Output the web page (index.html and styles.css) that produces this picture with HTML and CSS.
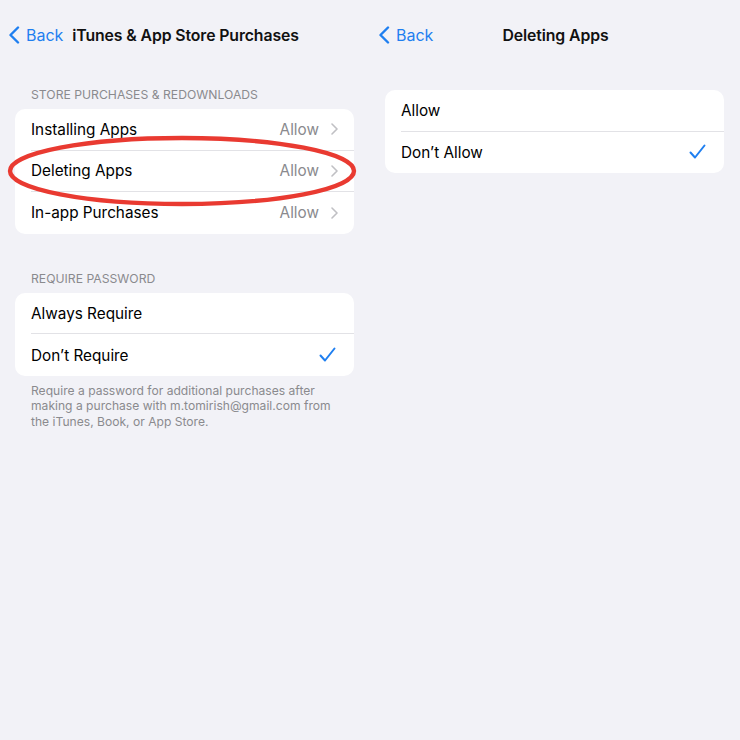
FILE: index.html
```html
<!doctype html>
<html>
<head>
<title>Settings</title>
<meta http-equiv="Content-Type" content="text/html; charset=utf-8" />
<link rel="stylesheet" href="styles.css">
</head>
<body>

<div class="screen">

<section class="panel">
	<div class="nav">
		<a class="back">
			<svg width="12" height="18" viewBox="0 0 12 18"><path d="M10 1.5 L2.5 9 L10 16.5" fill="none" stroke="currentColor" stroke-width="2.4" stroke-linecap="round" stroke-linejoin="round"/></svg>
			Back
		</a>
		<h3 class="title">iTunes &amp; App Store Purchases</h3>
		<span></span>
	</div>

	<div class="section first">
		<div class="section-header">STORE PURCHASES &amp; REDOWNLOADS</div>
		<div class="card">
			<div class="row">
				<span class="label">Installing Apps</span>
				<span class="value">Allow</span>
				<svg class="chevron" width="7" height="12" viewBox="0 0 7 12"><path d="M1 1 L6 6 L1 11" fill="none" stroke="currentColor" stroke-width="1.6" stroke-linecap="round" stroke-linejoin="round"/></svg>
			</div>
			<div class="row">
				<span class="label">Deleting Apps</span>
				<span class="value">Allow</span>
				<svg class="chevron" width="7" height="12" viewBox="0 0 7 12"><path d="M1 1 L6 6 L1 11" fill="none" stroke="currentColor" stroke-width="1.6" stroke-linecap="round" stroke-linejoin="round"/></svg>
			</div>
			<div class="row">
				<span class="label">In-app Purchases</span>
				<span class="value">Allow</span>
				<svg class="chevron" width="7" height="12" viewBox="0 0 7 12"><path d="M1 1 L6 6 L1 11" fill="none" stroke="currentColor" stroke-width="1.6" stroke-linecap="round" stroke-linejoin="round"/></svg>
			</div>
			<!-- Red annotation round the Deleting Apps row -->
			<svg class="annotation" width="354" height="76" viewBox="0 0 354 76"><ellipse cx="175" cy="37" rx="172" ry="33" fill="none" stroke="#e93a31" stroke-width="4.4"/></svg>
		</div>
	</div>

	<div class="section">
		<div class="section-header">REQUIRE PASSWORD</div>
		<div class="card">
			<div class="row">
				<span class="label">Always Require</span>
			</div>
			<div class="row">
				<span class="label">Don’t Require</span>
				<svg class="check" width="17" height="16" viewBox="0 0 17 16"><path d="M1.5 8.5 L6 13.5 L15.5 1.5" fill="none" stroke="currentColor" stroke-width="2" stroke-linecap="round" stroke-linejoin="round"/></svg>
			</div>
		</div>
		<p class="section-footer">Require a password for additional purchases after making a purchase with m.tomirish@gmail.com from the iTunes, Book, or App Store.</p>
	</div>
</section>

<section class="panel">
	<div class="nav">
		<a class="back">
			<svg width="12" height="18" viewBox="0 0 12 18"><path d="M10 1.5 L2.5 9 L10 16.5" fill="none" stroke="currentColor" stroke-width="2.4" stroke-linecap="round" stroke-linejoin="round"/></svg>
			Back
		</a>
		<h3 class="title">Deleting Apps</h3>
		<span></span>
	</div>

	<div class="section options">
		<div class="card">
			<div class="row">
				<span class="label">Allow</span>
			</div>
			<div class="row">
				<span class="label">Don’t Allow</span>
				<svg class="check" width="17" height="16" viewBox="0 0 17 16"><path d="M1.5 8.5 L6 13.5 L15.5 1.5" fill="none" stroke="currentColor" stroke-width="2" stroke-linecap="round" stroke-linejoin="round"/></svg>
			</div>
		</div>
	</div>
</section>

</div>

</body>
</html>
```

FILE: styles.css
```css
body {
	margin: 0;
	background-color: #f2f2f7;
	font-family: Inter, "Liberation Sans", sans-serif;
	color: #000;
}

.screen {
	display: flex;
	width: 740px;
	height: 740px;
}

.panel {
	width: 370px;
	box-sizing: border-box;
	padding: 15px 16px 0 15px;
}

.nav {
	display: grid;
	grid-template-columns: 1fr auto 1fr;
	align-items: center;
	height: 40px;
	margin: 0 -9px 0 -7px;
}

.back {
	display: flex;
	align-items: center;
	gap: 6px;
	color: #1f7ff0;
	font-size: 16px;
}

.title {
	margin: 0;
	font-size: 15.8px;
	font-weight: 600;
	letter-spacing: -0.1px;
	color: #111;
}

.section.first {
	margin-top: 32px;
}

.section {
	margin-top: 37px;
}

.section.options {
	margin-top: 35px;
}

.section-header {
	padding-left: 16px;
	font-size: 12.2px;
	line-height: 16px;
	color: #8a8a8e;
	margin-bottom: 6px;
}

.card {
	position: relative;
	background-color: #fff;
	border-radius: 10px;
}

.row {
	display: flex;
	align-items: center;
	height: 41.6px;
	margin-left: 16px;
	padding-right: 16px;
	box-sizing: border-box;
	border-bottom: 1px solid #e2e2e6;
	font-size: 15.3px;
}

.row:last-of-type {
	border-bottom: none;
}

.label {
	flex: 1;
}

.value {
	color: #8a8a8e;
}

.chevron {
	margin-left: 12px;
	color: #c0c0c4;
}

.check {
	margin-right: 2px;
	color: #1f7ff0;
}

.annotation {
	position: absolute;
	left: -8px;
	top: 25px;
}

.section-footer {
	margin: 7px 0 0;
	padding: 0 16px;
	font-size: 12.1px;
	line-height: 15.5px;
	color: #8a8a8e;
}
```
